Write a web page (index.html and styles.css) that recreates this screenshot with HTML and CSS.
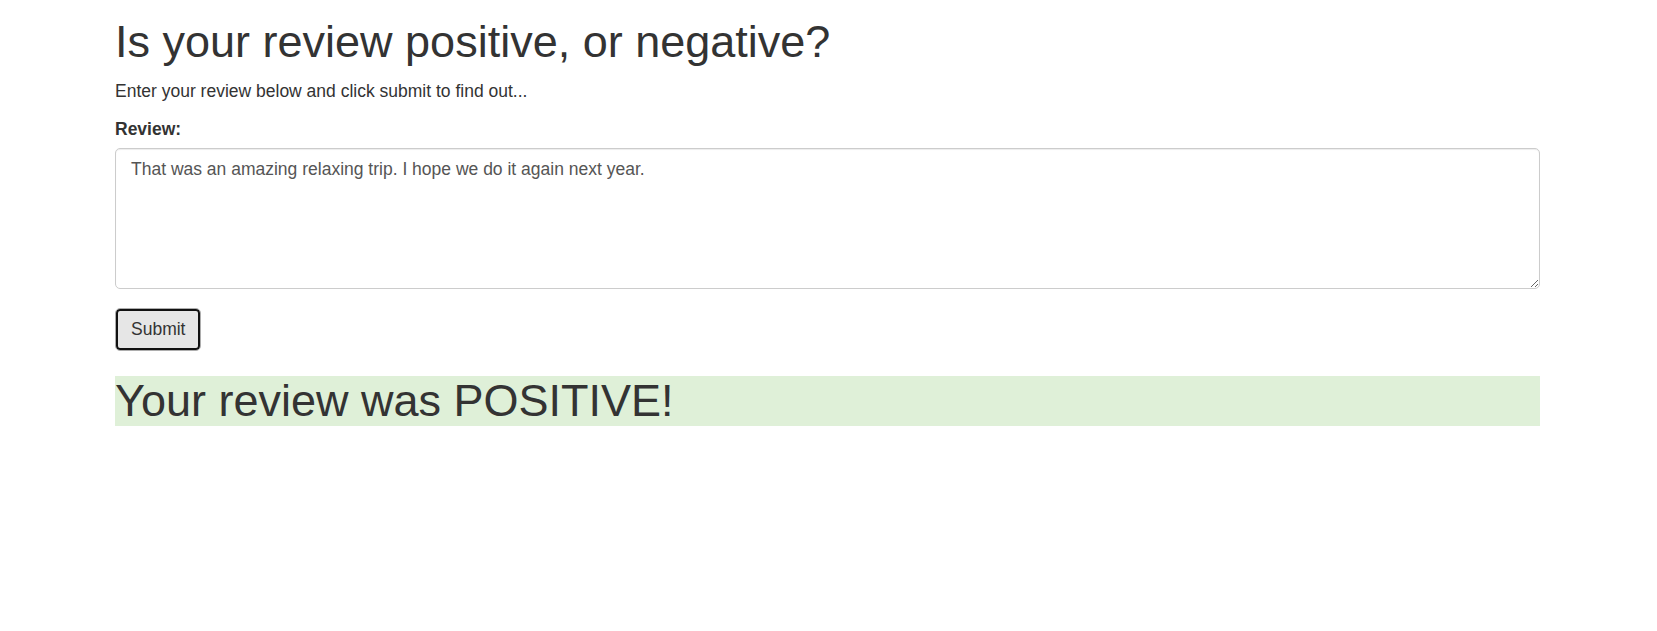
FILE: index.html
```html
<!DOCTYPE html>
<html>
<head>
<meta charset="utf-8">
<title>Review sentiment</title>
<link rel="stylesheet" href="styles.css">
</head>
<body>
<div class="container">
  <h1 class="title">Is your review positive, or negative?</h1>
  <p class="lead-text">Enter your review below and click submit to find out...</p>
  <form class="review-form">
    <div class="form-group">
      <label class="form-label" for="review">Review:</label>
      <textarea class="form-control" id="review">That was an amazing relaxing trip. I hope we do it again next year.</textarea>
    </div>
    <button type="button" class="btn">Submit</button>
  </form>
  <h1 class="result">Your review was POSITIVE!</h1>
</div>
</body>
</html>
```
FILE: styles.css
```css
html, body {
  margin: 0;
  padding: 0;
  background: #fff;
}
body {
  font-family: "Liberation Sans", Arial, Helvetica, sans-serif;
  font-size: 17.5px;
  line-height: 25px;
  color: #333;
}
.container {
  width: 1425px;
  margin-left: 115px;
}
.title {
  font-size: 45px;
  font-weight: 500;
  line-height: 49.5px;
  margin: 16.5px 0 13px;
}
.lead-text {
  margin: 0 0 13.3px;
}
.review-form {
  margin: 0;
}
.form-group {
  margin-bottom: 18.7px;
}
.form-label {
  display: block;
  font-weight: bold;
  margin-bottom: 6px;
}
.form-control {
  display: block;
  box-sizing: border-box;
  width: 100%;
  height: 141px;
  margin: 0;
  padding: 7.8px 15px;
  border: 1px solid #ccc;
  border-radius: 5px;
  font-family: inherit;
  font-size: 17.5px;
  line-height: 25px;
  color: #555;
  background: #fff;
  box-shadow: inset 0 1px 1px rgba(0,0,0,.075);
}
.btn {
  display: block;
  box-sizing: border-box;
  height: 43px;
  margin: 0;
  padding: 0 15px;
  border: 1px solid #adadad;
  border-radius: 5px;
  background: #e6e6e6;
  box-shadow: inset 0 0 0 2px #111;
  font-family: inherit;
  font-size: 17.5px;
  line-height: 25px;
  color: #333;
}
.result {
  margin: 25.5px 0 0;
  font-size: 45px;
  font-weight: 500;
  line-height: 49.5px;
  background: #dff0d8;
}
```
